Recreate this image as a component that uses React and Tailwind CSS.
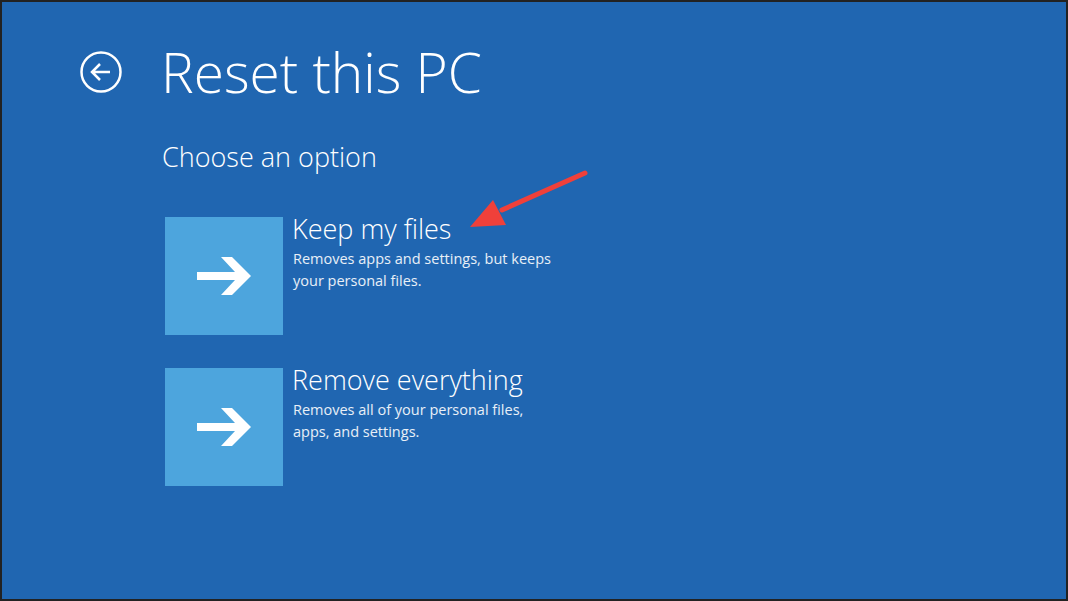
import React from "react";

const Arrow = () => (
  <svg width="58" height="46" viewBox="0 0 58 46">
    <path d="M2 19 H40 L26 4 H37 L56 23 L37 42 H26 L40 27 H2 Z" fill="#fff" />
  </svg>
);

const Option = ({ title, lines }) => (
  <div className="flex gap-[9px]">
    <div className="w-[118px] h-[118px] bg-[#4da5dd] flex items-center justify-center">
      <Arrow />
    </div>
    <div className="flex flex-col">
      <div className="text-[27px] leading-[28px] font-light text-white -mt-[2px]">{title}</div>
      <div className="text-[14.5px] leading-[22px] text-white/90 mt-[5px] ml-[1px]">
        {lines.map((l) => (
          <div key={l}>{l}</div>
        ))}
      </div>
    </div>
  </div>
);

export default function App() {
  return (
    <div
      className="w-[1068px] h-[601px] bg-[#222] p-[2px] overflow-hidden"
      style={{ fontFamily: '"Open Sans", "Noto Sans", sans-serif' }}
    >
      <div className="relative w-full h-full bg-[#2066b1] pt-[39px] pl-[77px]">
        <div className="flex items-center gap-[38px]">
          <svg width="44" height="44" viewBox="0 0 44 44">
            <circle cx="22" cy="22" r="19.5" fill="none" stroke="#fff" strokeWidth="2.5" />
            <path d="M13 22 H31 M21 14 L13 22 L21 30" fill="none" stroke="#fff" strokeWidth="2.5" />
          </svg>
          <div className="text-[55px] leading-[62px] font-light text-white">Reset this PC</div>
        </div>
        <div className="ml-[83px] mt-[38px] text-[27px] leading-[32px] font-light text-white">
          Choose an option
        </div>
        <div className="ml-[86px] mt-[44px] flex flex-col gap-[33px]">
          <Option
            title="Keep my files"
            lines={["Removes apps and settings, but keeps", "your personal files."]}
          />
          <Option
            title="Remove everything"
            lines={["Removes all of your personal files,", "apps, and settings."]}
          />
        </div>
        <svg className="absolute left-[466px] top-[166px]" width="124" height="64" viewBox="0 0 124 64">
          <line x1="117" y1="5" x2="34" y2="42" stroke="#f0403a" strokeWidth="5" strokeLinecap="round" />
          <polygon points="2,59 25,32 38,57" fill="#f0403a" />
        </svg>
      </div>
    </div>
  );
}
